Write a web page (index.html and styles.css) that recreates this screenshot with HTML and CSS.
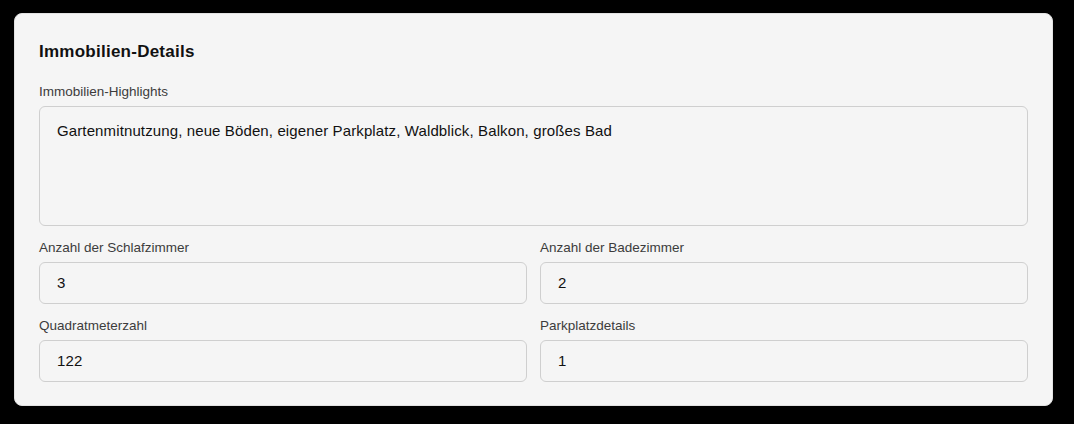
FILE: index.html
```html
<!DOCTYPE html>
<html lang="de">
<head>
<meta charset="utf-8">
<title>Immobilien-Details</title>
<link rel="stylesheet" href="styles.css">
</head>
<body>
<section class="card">
  <h2 class="card-title">Immobilien-Details</h2>
  <div class="field">
    <label class="field-label">Immobilien-Highlights</label>
    <div class="control control-area">Gartenmitnutzung, neue Böden, eigener Parkplatz, Waldblick, Balkon, großes Bad</div>
  </div>
  <div class="grid">
    <div class="field">
      <label class="field-label">Anzahl der Schlafzimmer</label>
      <div class="control">3</div>
    </div>
    <div class="field">
      <label class="field-label">Anzahl der Badezimmer</label>
      <div class="control">2</div>
    </div>
    <div class="field">
      <label class="field-label">Quadratmeterzahl</label>
      <div class="control">122</div>
    </div>
    <div class="field">
      <label class="field-label">Parkplatzdetails</label>
      <div class="control">1</div>
    </div>
  </div>
</section>
</body>
</html>
```

FILE: styles.css
```css
html, body {
  margin: 0;
  padding: 0;
  background: #000;
}
body {
  padding: 13px 21px 17px 14px;
  font-family: "Liberation Sans", Arial, sans-serif;
  color: #111;
}
.card {
  background: #f5f5f5;
  border: 1px solid #e2e2e2;
  border-radius: 8px;
  padding: 28px 24px 23px 24px;
  display: flex;
  flex-direction: column;
  gap: 14px;
}
.card-title {
  margin: 0 0 8px 0;
  font-size: 17px;
  line-height: 20px;
  font-weight: 700;
  letter-spacing: 0.25px;
  color: #111;
}
.field {
  display: flex;
  flex-direction: column;
  gap: 6px;
}
.field-label {
  font-size: 13.5px;
  line-height: 16px;
  color: #3c3c3c;
}
.control {
  box-sizing: border-box;
  height: 42px;
  border: 1px solid #cfcfcf;
  border-radius: 6px;
  background: #f5f5f5;
  padding: 0 17px;
  font-size: 15px;
  letter-spacing: 0.12px;
  line-height: 40px;
  color: #111;
}
.control-area {
  height: 120px;
  line-height: 18px;
  padding-top: 15px;
}
.grid {
  display: grid;
  grid-template-columns: 1fr 1fr;
  column-gap: 13px;
  row-gap: 14px;
}
```
